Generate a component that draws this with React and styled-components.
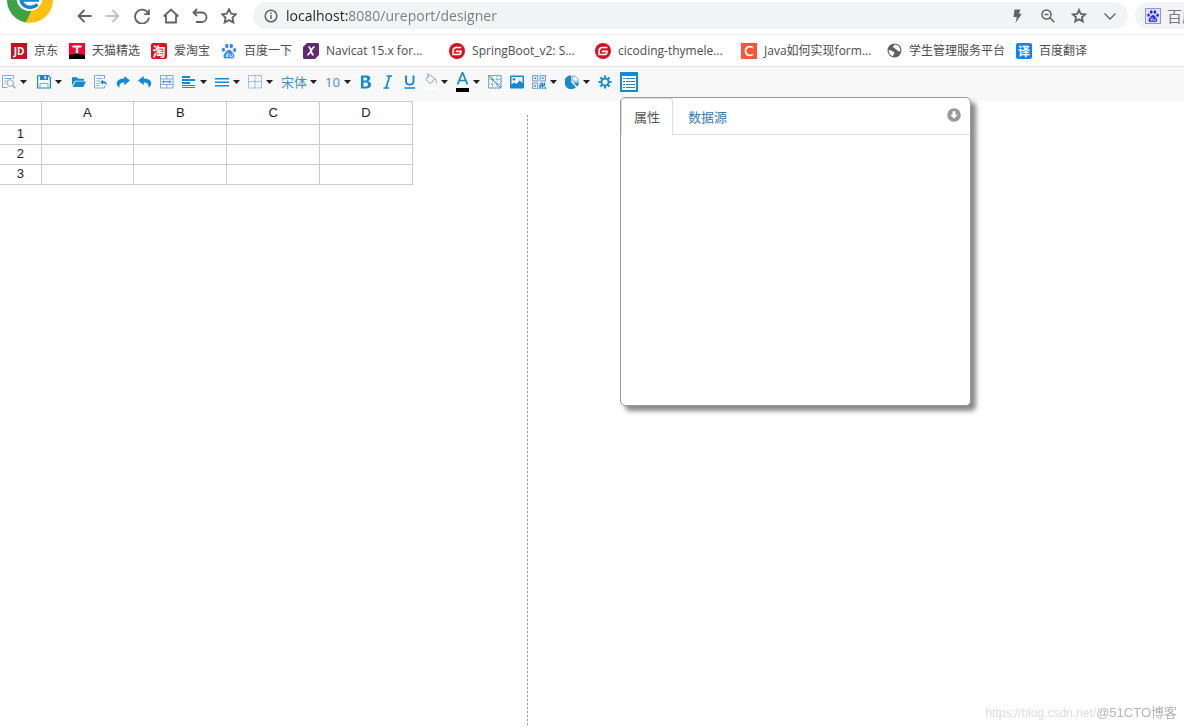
import React from "react";
import styled, { createGlobalStyle } from "styled-components";

const BLUE = "#128bd4";
const PALE = "#7fa9dc";

const icons = {
  preview: (
    <g fill="none" stroke={PALE}>
      <path d="M11.5 4V.5H.5v12h5M2.5 3.5h7M2.5 6h2M2.5 8.5h1" />
      <circle cx="8.2" cy="8" r="3.3" />
      <path d="M10.6 10.4l2.8 2.9" strokeWidth="1.4" />
    </g>
  ),
  save: (
    <g>
      <path d="M.6 1.5V13h12.8V3L11.5.7H1.2z" fill="none" stroke={BLUE} strokeWidth="1.2" />
      <path d="M3 0h8v5H3z" fill={BLUE} />
      <path d="M7.5 1h1.6v3H7.5z" fill="#fff" />
      <path d="M3 13V8.5h8V13" fill="none" stroke={PALE} />
    </g>
  ),
  open: (
    <g fill={BLUE}>
      <path d="M0 2.3h4.8l1.4 1.5h5.6v2H3L0 10.5z" />
      <path d="M3.5 6.5H14L11.3 12H.7z" />
    </g>
  ),
  importFile: (
    <g fill="none" stroke={PALE}>
      <path d="M10.5 4V.5H.5V13h10v-2M2.5 3.5h6M2.5 6H6M2.5 8.5h3M2.5 10.5h3" />
      <path d="M9 4.5L6.2 7.2 9 9.8V8.3c2 0 3.2.8 4 2.4 0-2.8-1.3-4.5-4-4.7z" fill={BLUE} stroke="none" />
    </g>
  ),
  redo: (
    <path d="M8.3 1L14 5.6l-5.7 4.6V7.5C5 7.4 3 9.200 3.300 13 1 11 .3 8.800 1 7c.9-2.300 3.300-3.500 7.300-3.500z" fill={BLUE} />
  ),
  undo: (
    <path d="M5.7 1L0 5.6l5.7 4.6V7.5C9 7.4 11 9.2 10.7 13c2.300-2 3-4.200 2.300-6-.9-2.300-3.300-3.500-7.300-3.500z" fill={BLUE} />
  ),
  merge: (
    <g fill="none" stroke={PALE}>
      <path d="M.5.5H13V13H.5zM.5 4H13M.5 9.500H13M6.750.5V4M6.750 9.500V13" />
      <path d="M3 6.750h7.500" stroke={BLUE} />
      <path d="M2 6.750l2-1.600v3.200zM11.500 6.750l-2-1.600v3.200z" fill={BLUE} stroke="none" />
    </g>
  ),
  alignLeft: <path d="M0 1h8v2H0zM0 4h13v2H0zM0 7h8v2H0zM0 10h13v1H0zM0 12h13v1H0z" fill={BLUE} />,
  alignMiddle: <path d="M0 3h14v1.5H0zM0 6.5h14V8H0zM0 10h14v1.5H0z" fill={BLUE} />,
  border: (
    <path
      d="M.5.5h13V13H.5zM7 .5V13M.5 6.5h13"
      fill="none"
      stroke={PALE}
      strokeDasharray="1.5 .7"
    />
  ),
  bold: (
    <path
      d="M2 .5h5.500c5 0 4.500 5 1.500 5.700C13.500 6.800 13 13.500 7.500 13.500H2zM4.500 2.500v3h2.200c2 0 2-3 0-3zM4.500 7.600v3.900h2.700c2.500 0 2.500-3.900 0-3.900z"
      fill={BLUE}
      fillRule="evenodd"
    />
  ),
  italic: <path d="M5.500 1H11M2.500 13H8M8.600 1L5 13" fill="none" stroke={BLUE} strokeWidth="1.7" />,
  underline: (
    <g fill="none" stroke={BLUE}>
      <path d="M3 .5v5.700c0 4.600 7.500 4.600 7.500 0V.5" strokeWidth="1.9" />
      <path d="M1.500 13h10.500" strokeWidth="1.600" />
    </g>
  ),
  slash: (
    <g fill="none" stroke={PALE}>
      <path d="M.5.5H13V13H.5zM.5 4.5h12M4.500.5V13M9 .5V13M.5 9h12" strokeDasharray="1.5 1" />
      <path d="M.5.5H13V13H.5z" />
      <path d="M.5.5L13 13" stroke={BLUE} />
    </g>
  ),
  image: (
    <g>
      <rect width="14" height="13" y=".5" rx="1" fill={BLUE} />
      <path d="M1.5 2h11v6l-3-2.500-3 3.500L4 7.500l-2.500 2z" fill="#f8f8f8" />
      <circle cx="4" cy="4.3" r="1.3" fill={BLUE} />
    </g>
  ),
  qr: (
    <g fill="none" stroke={PALE} strokeWidth="1.2">
      <path d="M.6.6h5.200v5.200H.6zM8.200.6h5.200v5.200H8.200zM.6 8.200h5.200v5.200H.6z" />
      <path d="M2.300 3.200h1.800M9.900 3.200h1.800M2.300 10.800h1.800M8 8.500h2.500v2H8V14M12.500 7.500v3h-2V14M13.300 12v2" stroke={BLUE} strokeWidth="1.400" />
    </g>
  ),
  chart: (
    <g>
      <path d="M6.3.3v7l4.600 5A6.900 6.900 0 1 1 6.300.3z" fill={BLUE} />
      <path d="M7.8.9a5.800 5.800 0 0 1 5.600 5.300H7.800z" fill="none" stroke={PALE} />
      <path d="M8.3 7.5H14a6 6 0 0 1-1.9 4z" fill={BLUE} />
    </g>
  ),
  gear: (
    <g fill="none" stroke={BLUE}>
      <circle cx="7" cy="7" r="3.6" strokeWidth="2" />
      <path
        d="M7 .5v2.300M7 11.200v2.300M.5 7h2.300M11.200 7h2.300M2.400 2.400L4 4M10 10l1.600 1.600M11.600 2.400L10 4M4 10l-1.600 1.600"
        strokeWidth="2"
      />
    </g>
  ),
};

const tools = [
  { icon: "preview", label: "预览", menu: true, roomy: true },
  { icon: "save", label: "保存", menu: true, roomy: true },
  { icon: "open", label: "打开" },
  { icon: "importFile", label: "导入" },
  { icon: "redo", label: "重做" },
  { icon: "undo", label: "撤销" },
  { icon: "merge", label: "合并单元格" },
  { icon: "alignLeft", label: "水平对齐", menu: true },
  { icon: "alignMiddle", label: "垂直对齐", menu: true },
  { icon: "border", label: "边框", menu: true },
];

const styleTools = [
  { icon: "bold", label: "加粗" },
  { icon: "italic", label: "斜体" },
  { icon: "underline", label: "下划线" },
];

const insertTools = [
  { icon: "slash", label: "斜线表头" },
  { icon: "image", label: "图片" },
  { icon: "qr", label: "二维码", menu: true },
  { icon: "chart", label: "图表", menu: true },
  { icon: "gear", label: "设置" },
];

const Badge = ({ bg, radius = 0, children }) => (
  <svg width="16" height="16" viewBox="0 0 16 16" aria-hidden="true">
    <rect width="16" height="16" rx={radius} fill={bg} />
    {children}
  </svg>
);

const Paw = ({ color, framed }) => (
  <svg width="16" height="16" viewBox="0 0 16 16" aria-hidden="true">
    {framed && <rect x=".5" y=".5" width="15" height="15" fill="#dfe3fa" stroke="#8c93ef" />}
    <g transform={framed ? "translate(1.6 1.6) scale(.8)" : undefined}>
      <g fill={color}>
        <ellipse cx="5.8" cy="3" rx="1.7" ry="2.3" />
        <ellipse cx="10.3" cy="3" rx="1.7" ry="2.3" />
        <ellipse cx="2.4" cy="6.8" rx="1.6" ry="2" />
        <ellipse cx="13.7" cy="7" rx="1.6" ry="2" />
        <path d="M8 6.8c2 0 2.500 2 4.200 3.600 2.400 2.500.8 5-1.700 5-1.500 0-3.500-.3-5 0-2.800.3-4.200-2.600-1.800-5C5.500 8.800 6 6.800 8 6.800z" />
      </g>
      <path d="M7 9.500v4.200H5.300v-2H7M9 11v2.700h2.300V11" fill="none" stroke="#fff" strokeWidth=".8" />
    </g>
  </svg>
);

const GMark = () => (
  <svg width="16" height="16" viewBox="0 0 16 16" aria-hidden="true">
    <circle cx="8" cy="8" r="8" fill="#d8101e" />
    <path d="M12.300 4.500H7.500c-2.300 0-3.300 1-3.300 2.800v4.200H10c1.600 0 2-.8 2-3.200H6.800" fill="none" stroke="#fff" strokeWidth="1.7" />
  </svg>
);

const BadgeText = styled.text`
  font: bold ${(p) => p.$size}px "Open Sans", "Noto Sans CJK SC", sans-serif;
  fill: #fff;
  text-anchor: middle;
`;

const bookmarks = [
  {
    text: "京东",
    icon: (
      <Badge bg="#c4121f">
        <BadgeText x="8" y="12" $size={10}>JD</BadgeText>
      </Badge>
    ),
  },
  {
    text: "天猫精选",
    icon: (
      <Badge bg="#ff0033">
        <path d="M0 12c4-1.500 12-1.500 16 0v4H0z" fill="#000" />
        <path d="M3.500 2.500h9v2H9.200V10H6.800V4.500H3.500z" fill="#fff" />
      </Badge>
    ),
  },
  {
    text: "爱淘宝",
    icon: (
      <Badge bg="#e2101c" radius={2}>
        <BadgeText x="8" y="13" $size={13}>淘</BadgeText>
      </Badge>
    ),
  },
  { text: "百度一下", icon: <Paw color="#3385ff" /> },
  {
    text: "Navicat 15.x for...",
    wide: true,
    icon: (
      <svg width="16" height="16" viewBox="0 0 16 16" aria-hidden="true">
        <path d="M4 0h11l1 1v11l-4 4H1l-1-1V4z" fill="#5e2a76" />
        <path d="M5.500 3.800c3 0 2 8.200 5.200 8.200M11.500 3.800C9 4 7.500 11 4.200 12" fill="none" stroke="#fff" strokeWidth="1.7" />
      </svg>
    ),
  },
  { text: "SpringBoot_v2: S...", wide: true, icon: <GMark /> },
  { text: "cicoding-thymele...", wide: true, icon: <GMark /> },
  {
    text: "Java如何实现form...",
    wide: true,
    icon: (
      <Badge bg="#fc5531">
        <path d="M12 4.800C9.500 2.800 4.500 3 4.500 8s5 5.200 7.500 3.200" fill="none" stroke="#fff" strokeWidth="1.8" />
      </Badge>
    ),
  },
  {
    text: "学生管理服务平台",
    icon: (
      <svg width="15" height="15" viewBox="0 0 15 15" aria-hidden="true">
        <circle cx="7.5" cy="7.5" r="7" fill="#5f6368" />
        <path
          d="M1.600 7.500C3 6.900 4.500 7.300 5.500 8.200c.8.8 2 .5 2 1.800 0 1-1.500 1.500-1.500 3.200C3.500 12.500 1.800 10.500 1.600 7.500zM7.800 1.600c-.2 1.200-1.800 1-1.700 2.400.1.9 1.500.5 1.900 1.500.4 1 1.900.7 2.200 1.700.3.9 1.800.6 3.100 1.200.5-3.500-2-6.600-5.500-6.800z"
          fill="#fff"
        />
      </svg>
    ),
  },
  {
    text: "百度翻译",
    icon: (
      <Badge bg="#0f83ff" radius={2}>
        <BadgeText x="8" y="13" $size={12}>译</BadgeText>
      </Badge>
    ),
  },
];

const navButtons = [
  { label: "后退", path: "M15.5 8H2.500M8.500 2l-6 6 6 6" },
  { label: "前进", path: "M.5 8h13M7.500 2l6 6-6 6", muted: true },
  { label: "刷新", path: "M14.200 5.200A7 7 0 1 0 15 9.500M15 1.500v4.700h-4.700" },
  { label: "主页", path: "M.7 8.500L8 1.500l7.300 7M3 7v7.500h10V7" },
  { label: "恢复", path: "M5 1L1.500 4.500 5 8M1.800 4.500H10c6 0 6 9.500 0 9.500H4" },
  {
    label: "收藏",
    path: "M8 1l2.100 4.600 5 .6-3.700 3.400 1 4.900L8 12.100l-4.400 2.400 1-4.900L.9 6.200l5-.6z",
  },
];

function Tool({ icon, label, menu, roomy }) {
  return (
    <ToolButton type="button" aria-label={label} $roomy={roomy}>
      <svg width="14" height="14" viewBox="0 0 14 14">
        {icons[icon]}
      </svg>
      {menu && <Caret />}
    </ToolButton>
  );
}

const Caret = () => (
  <svg width="7" height="4" viewBox="0 0 7 4" aria-hidden="true">
    <path d="M0 0h7L3.5 4z" fill="#222" />
  </svg>
);

function BrowserBar() {
  return (
    <TopBar>
      <svg width="48" height="24" viewBox="0 0 48 24" aria-hidden="true">
        <path d="M1 0a23 23 0 0 0 19 22.500L34 0z" fill="#3da245" />
        <path d="M20 22.500A23 23 0 0 0 47 0H30z" fill="#fdc00f" />
        <circle cx="23.500" cy="-2" r="13" fill="#fff" />
        <path d="M15 -2c0 10 11 11.500 16.500 6.500M14 0h19" fill="none" stroke="#1685cf" strokeWidth="3.500" />
      </svg>
      <NavButtons>
        {navButtons.map((b) => (
          <NavButton key={b.label} type="button" aria-label={b.label} $muted={b.muted}>
            <svg width="16" height="16" viewBox="0 0 16 16">
              <path d={b.path} />
            </svg>
          </NavButton>
        ))}
      </NavButtons>
      <AddressBar>
        <svg width="14" height="14" viewBox="0 0 14 14" aria-hidden="true">
          <circle cx="7" cy="7" r="5.8" />
          <path d="M7 6v4M7 3.500V5" />
        </svg>
        <Address aria-label="地址" defaultValue="localhost:8080/ureport/designer" />
        <NavButton type="button" aria-label="加速">
          <svg width="16" height="16" viewBox="0 0 16 16">
            <path d="M5.500 1.500h6L9.800 5.800h3L6.500 15l1.300-6H4.500z" fill="#5f6368" stroke="none" />
          </svg>
        </NavButton>
        <NavButton type="button" aria-label="缩放">
          <svg width="16" height="16" viewBox="0 0 16 16">
            <path d="M6.500 2a4.500 4.500 0 1 0 0 9 4.500 4.500 0 0 0 0-9M9.800 9.800l4.500 4.500M4.500 6.500h4" strokeWidth="1.5" />
          </svg>
        </NavButton>
        <NavButton type="button" aria-label="加入收藏">
          <svg width="16" height="16" viewBox="0 0 16 16">
            <path d="M8 2l1.800 4 4.300.4-3.200 2.900.9 4.200L8 11.300l-3.800 2.200.9-4.200-3.200-2.900 4.300-.4z" />
          </svg>
        </NavButton>
        <NavButton type="button" aria-label="更多" $thin>
          <svg width="16" height="16" viewBox="0 0 16 16">
            <path d="M2.500 5.500L8 11l5.500-5.500" />
          </svg>
        </NavButton>
      </AddressBar>
      <SearchBox>
        <Paw color="#2529dc" framed />
        <input aria-label="搜索" defaultValue="百度" />
      </SearchBox>
    </TopBar>
  );
}

function Sheet() {
  return (
    <Grid>
      <thead>
        <tr>
          <RowHead as="td" />
          {["A", "B", "C", "D"].map((c) => (
            <th key={c} scope="col">{c}</th>
          ))}
        </tr>
      </thead>
      <tbody>
        {[1, 2, 3].map((r) => (
          <tr key={r}>
            <RowHead scope="row">{r}</RowHead>
            <td />
            <td />
            <td />
            <td />
          </tr>
        ))}
      </tbody>
    </Grid>
  );
}

export default function App() {
  return (
    <Page>
      <GlobalStyle />
      <BrowserBar />
      <Bookmarks>
        {bookmarks.map((b) => (
          <Bookmark key={b.text} href="#" $wide={b.wide}>
            {b.icon}
            <span>{b.text}</span>
          </Bookmark>
        ))}
      </Bookmarks>
      <Toolbar>
        {tools.map((t) => (
          <Tool key={t.icon} {...t} />
        ))}
        <Picker $width={26}>
          <select aria-label="字体">
            <option>宋体</option>
          </select>
          <Caret />
        </Picker>
        <Picker $width={16}>
          <select aria-label="字号">
            <option>10</option>
          </select>
          <Caret />
        </Picker>
        {styleTools.map((t) => (
          <Tool key={t.icon} {...t} />
        ))}
        <ToolButton type="button" aria-label="背景色">
          <svg width="12" height="18" viewBox="0 0 12 18">
            <path d="M3 0v5M4.500 1.500L10 6l-5 4.500L.7 6.300 4.500 2M10 6c1.300.5 1.500 2 1.300 4" fill="none" stroke={PALE} />
            <path d="M0 14h12v3H0z" fill="#fff" />
          </svg>
          <Caret />
        </ToolButton>
        <ToolButton type="button" aria-label="文字颜色">
          <svg width="13" height="20" viewBox="0 0 13 20">
            <path d="M1.500 12.500l5-12 5 12M3.300 8.500h6.400" fill="none" stroke={BLUE} strokeWidth="1.7" />
            <path d="M0 16h13v4H0z" fill="#000" />
          </svg>
          <Caret />
        </ToolButton>
        {insertTools.map((t) => (
          <Tool key={t.icon} {...t} />
        ))}
        <ToolButton type="button" aria-label="属性面板">
          <svg width="18" height="20" viewBox="0 0 18 20">
            <path d="M1 1h16v18H1z" fill="#fff" stroke={BLUE} strokeWidth="2" />
            <path d="M0 0h18v4H0z" fill={BLUE} />
            <path
              d="M3 6h2v1H3zM6 6h9v1H6zM3 9h2v1H3zM6 9h9v1H6zM3 12h2v1H3zM6 12h9v1H6zM3 15h2v1H3zM6 15h9v1H6z"
              fill={BLUE}
            />
          </svg>
        </ToolButton>
      </Toolbar>
      <Workspace>
        <Canvas>
          <Sheet />
        </Canvas>
        <PageEdge />
        <Panel>
          <Tabs role="tablist">
            <Tab type="button" role="tab" aria-selected="true" $active>
              属性
            </Tab>
            <Tab type="button" role="tab" aria-selected="false">
              数据源
            </Tab>
            <Collapse type="button" aria-label="收起">
              <svg width="14" height="14" viewBox="0 0 14 14">
                <circle cx="7" cy="7" r="6.8" fill="#999" />
                <path d="M5.500 3.200h3v3.500h2.200L7 10.700 3.300 6.700h2.200z" fill="#fff" />
              </svg>
            </Collapse>
          </Tabs>
        </Panel>
      </Workspace>
      <Watermark>
        <span>https://blog.csdn.net/</span>
        <strong>@51CTO博客</strong>
      </Watermark>
    </Page>
  );
}

const GlobalStyle = createGlobalStyle`
  * {
    box-sizing: border-box;
  }
  body {
    margin: 0;
    background: #fff;
    font-family: "Open Sans", "Noto Sans CJK SC", sans-serif;
    overflow-x: hidden;
  }
  button, input, select {
    font: inherit;
    border: none;
    background: none;
    padding: 0;
    outline: none;
  }
  svg {
    flex: none;
    display: block;
  }
`;

const Page = styled.div`
  min-height: 100vh;
  display: flex;
  flex-direction: column;
`;

const TopBar = styled.header`
  display: flex;
  align-items: flex-start;
  height: 35px;
  padding-left: 6px;
  border-bottom: 1px solid #eeeff0;
  overflow: hidden;
`;

const NavButtons = styled.nav`
  display: flex;
  margin: 2px 10px 0 15px;
`;

const NavButton = styled.button`
  width: 29px;
  height: 28px;
  display: flex;
  align-items: center;
  justify-content: center;
  svg {
    fill: none;
    stroke: ${(p) => (p.$muted ? "#c0c1c3" : "#5f6368")};
    stroke-width: ${(p) => (p.$thin ? "1.3px" : "1.8px")};
  }
`;

const AddressBar = styled.div`
  flex: 1;
  min-width: 0;
  height: 27px;
  margin: 2px 7px 0 0;
  padding: 0 4px 0 11px;
  display: flex;
  align-items: center;
  gap: 2px;
  background: #f1f3f4;
  border-radius: 14px;
  > svg {
    fill: none;
    stroke: #5f6368;
    stroke-width: 1.5px;
  }
`;

const Address = styled.input`
  flex: 1;
  min-width: 0;
  margin-left: 6px;
  font-size: 14px;
  line-height: 20px;
  color: transparent;
  background: linear-gradient(90deg, #222 62px, #777b80 62px);
  background-clip: text;
`;

const SearchBox = styled.label`
  flex: none;
  width: 49px;
  height: 27px;
  margin-top: 2px;
  padding-left: 10px;
  display: flex;
  align-items: center;
  gap: 6px;
  background: #f1f3f4;
  border-radius: 14px 0 0 14px;
  input {
    width: 17px;
    font-size: 15px;
    color: #777b80;
  }
`;

const Bookmarks = styled.nav`
  height: 32px;
  padding: 0 11px;
  display: flex;
  align-items: center;
  gap: 11px;
  border-bottom: 1px solid #e2e3e4;
`;

const Bookmark = styled.a`
  display: flex;
  align-items: center;
  gap: 7px;
  font-size: 12px;
  line-height: 18px;
  color: #4a4c4f;
  text-decoration: none;
  white-space: nowrap;
  span {
    width: ${(p) => (p.$wide ? "112px" : "auto")};
  }
`;

const Toolbar = styled.div`
  height: 34px;
  padding: 0 2px 4px;
  display: flex;
  align-items: center;
  gap: 8px;
  background: #f8f8f8;
`;

const ToolButton = styled.button`
  height: 24px;
  display: flex;
  align-items: center;
  gap: 4px;
  margin-right: ${(p) => (p.$roomy ? "2px" : "0")};
`;

const Picker = styled.label`
  display: flex;
  align-items: center;
  gap: 3px;
  select {
    width: ${(p) => p.$width}px;
    appearance: none;
    font-size: 13px;
    line-height: 20px;
    color: #3a8fd0;
  }
`;

const Workspace = styled.main`
  position: relative;
  flex: 1;
  display: flex;
`;

const Canvas = styled.section`
  flex: none;
  width: 527px;
`;

const PageEdge = styled.div`
  width: 1px;
  margin-top: 14px;
  background: repeating-linear-gradient(#999 0 2px, #eee 2px 4px);
`;

const Grid = styled.table`
  width: 413px;
  table-layout: fixed;
  border-collapse: collapse;
  font: 13px "Liberation Sans", Arial, sans-serif;
  color: #222;
  th,
  td {
    height: 20px;
    padding: 0 0 2px;
    font-weight: normal;
    text-align: center;
    border: 1px solid #ccc;
  }
  thead th {
    height: 23px;
  }
`;

const RowHead = styled.th`
  width: 41px;
  && {
    border-left: none;
  }
`;

const Panel = styled.aside`
  position: absolute;
  top: -4px;
  left: 620px;
  width: 351px;
  height: 309px;
  background: #fff;
  border: 1px solid #999;
  border-radius: 5px;
  box-shadow: 5px 5px 5px #888;
`;

const Tabs = styled.div`
  display: flex;
  gap: 2px;
  height: 37px;
  border-bottom: 1px solid #ddd;
`;

const Tab = styled.button`
  height: 37px;
  padding: 0 12px;
  font-size: 13px;
  line-height: 20px;
  color: ${(p) => (p.$active ? "#555" : "#337ab7")};
  background: ${(p) => (p.$active ? "#fff" : "none")};
  border: 1px solid ${(p) => (p.$active ? "#ddd" : "transparent")};
  border-bottom: none;
  border-radius: 4px 4px 0 0;
`;

const Collapse = styled.button`
  height: 34px;
  margin-left: auto;
  margin-right: 9px;
`;

const Watermark = styled.footer`
  position: fixed;
  right: 7px;
  bottom: 4px;
  display: flex;
  font: 12px "Liberation Sans", "Noto Sans CJK SC", sans-serif;
  line-height: 20px;
  pointer-events: none;
  span {
    color: #dcdcdc;
  }
  strong {
    font-size: 13px;
    font-weight: normal;
    color: #b4b4b4;
  }
`;
